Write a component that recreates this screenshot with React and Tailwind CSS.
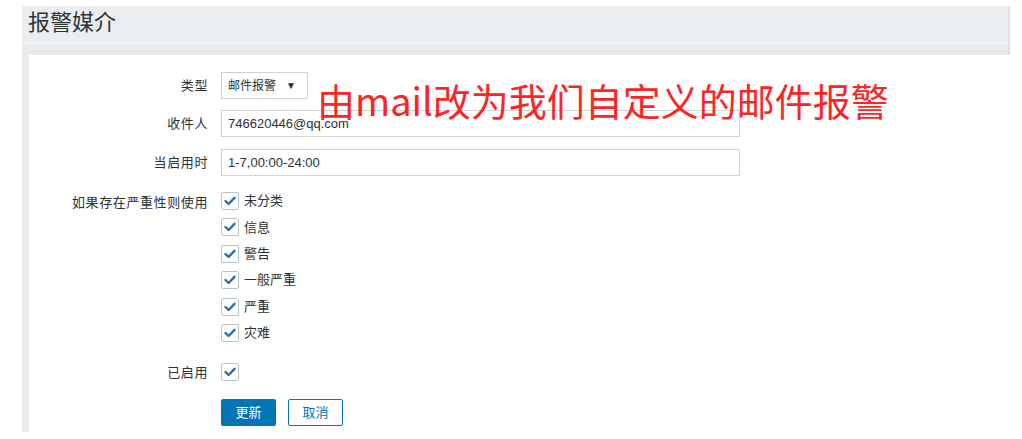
import React from "react";

const CJK = { fontFamily: '"Liberation Sans", "Noto Sans CJK SC", sans-serif' };

function Check() {
  return (
    <span className="inline-flex h-[18px] w-[18px] items-center justify-center rounded-[2px] border border-[#b9c5cb] bg-white">
      <svg width="12" height="10" viewBox="0 0 12 10">
        <path d="M1.5 5 L4.6 8 L10.5 1.8" fill="none" stroke="#2a6fad" strokeWidth="2.4" strokeLinecap="round" strokeLinejoin="round" />
      </svg>
    </span>
  );
}

const sev = ["未分类", "信息", "警告", "一般严重", "严重", "灾难"];

export default function App() {
  return (
    <div className="relative h-[439px] w-[1022px] overflow-hidden bg-white text-[#2b3236]" style={CJK}>
      <div className="ml-[22px] pt-[6px]">
        <div className="w-[988px] border-r-2 border-[#dde1e3] bg-[#ebeef0]">
          <div className="h-[36px] pl-[6px] text-[22px] leading-[34px] text-[#2d3438]">报警媒介</div>
          <div className="h-[2px] bg-[#f2f4f5]"></div>
          <div className="h-[11px] bg-[#e8eaeb]"></div>
        </div>
        <div className="flex h-[377px]">
          <div className="w-[7px] bg-[#e8ebec]"></div>
          <div className="flex-1 bg-white pt-[17px] text-[13px]">
            <div className="flex h-[27px] items-center">
              <div className="w-[181px] pr-[2px] text-right tracking-[0.6px]">类型</div>
              <div className="ml-[11px] flex h-[27px] w-[87px] items-center border border-[#cdd3d6] bg-white pl-[6px] text-[12px]">
                邮件报警<span className="ml-[10px] text-[10px]">▼</span>
              </div>
            </div>
            <div className="mt-[11px] flex h-[27px] items-center">
              <div className="w-[181px] pr-[2px] text-right tracking-[0.6px]">收件人</div>
              <div className="ml-[11px] flex h-[27px] w-[519px] items-center border border-[#cdd3d6] bg-white pl-[6px] text-[13px]">
                746620446@qq.com
              </div>
            </div>
            <div className="mt-[12px] flex h-[27px] items-center">
              <div className="w-[181px] pr-[2px] text-right tracking-[0.6px]">当启用时</div>
              <div className="ml-[11px] flex h-[27px] w-[519px] items-center border border-[#cdd3d6] bg-white pl-[6px] text-[13px]">
                1-7,00:00-24:00
              </div>
            </div>
            <div className="mt-[16px] flex">
              <div className="w-[181px] pr-[2px] pt-[1px] text-right tracking-[0.6px]">如果存在严重性则使用</div>
              <div className="ml-[11px] flex flex-col">
                {sev.map((s, i) => (
                  <div key={s} className={`flex h-[18px] items-center ${i > 0 ? "mt-[8.4px]" : ""}`}>
                    <Check />
                    <span className="ml-[5px]">{s}</span>
                  </div>
                ))}
              </div>
            </div>
            <div className="mt-[21px] flex h-[19px] items-center">
              <div className="w-[181px] pr-[2px] text-right tracking-[0.6px]">已启用</div>
              <div className="ml-[11px]">
                <Check />
              </div>
            </div>
            <div className="ml-[192px] mt-[17px] flex gap-[12px]">
              <div className="flex h-[27px] w-[55px] items-center justify-center rounded-[2px] bg-[#0275b8] text-[13px] text-white">更新</div>
              <div className="flex h-[27px] w-[55px] items-center justify-center rounded-[2px] border border-[#0275b8] bg-white text-[13px] text-[#0275b8]">取消</div>
            </div>
          </div>
        </div>
      </div>
      <div className="absolute left-[317px] top-[75px] text-[38px] leading-[50px] text-[#ff2424]" style={{ fontFamily: '"Noto Sans CJK SC", "Noto Sans", sans-serif' }}>
        由mail改为我们自定义的邮件报警
      </div>
    </div>
  );
}
